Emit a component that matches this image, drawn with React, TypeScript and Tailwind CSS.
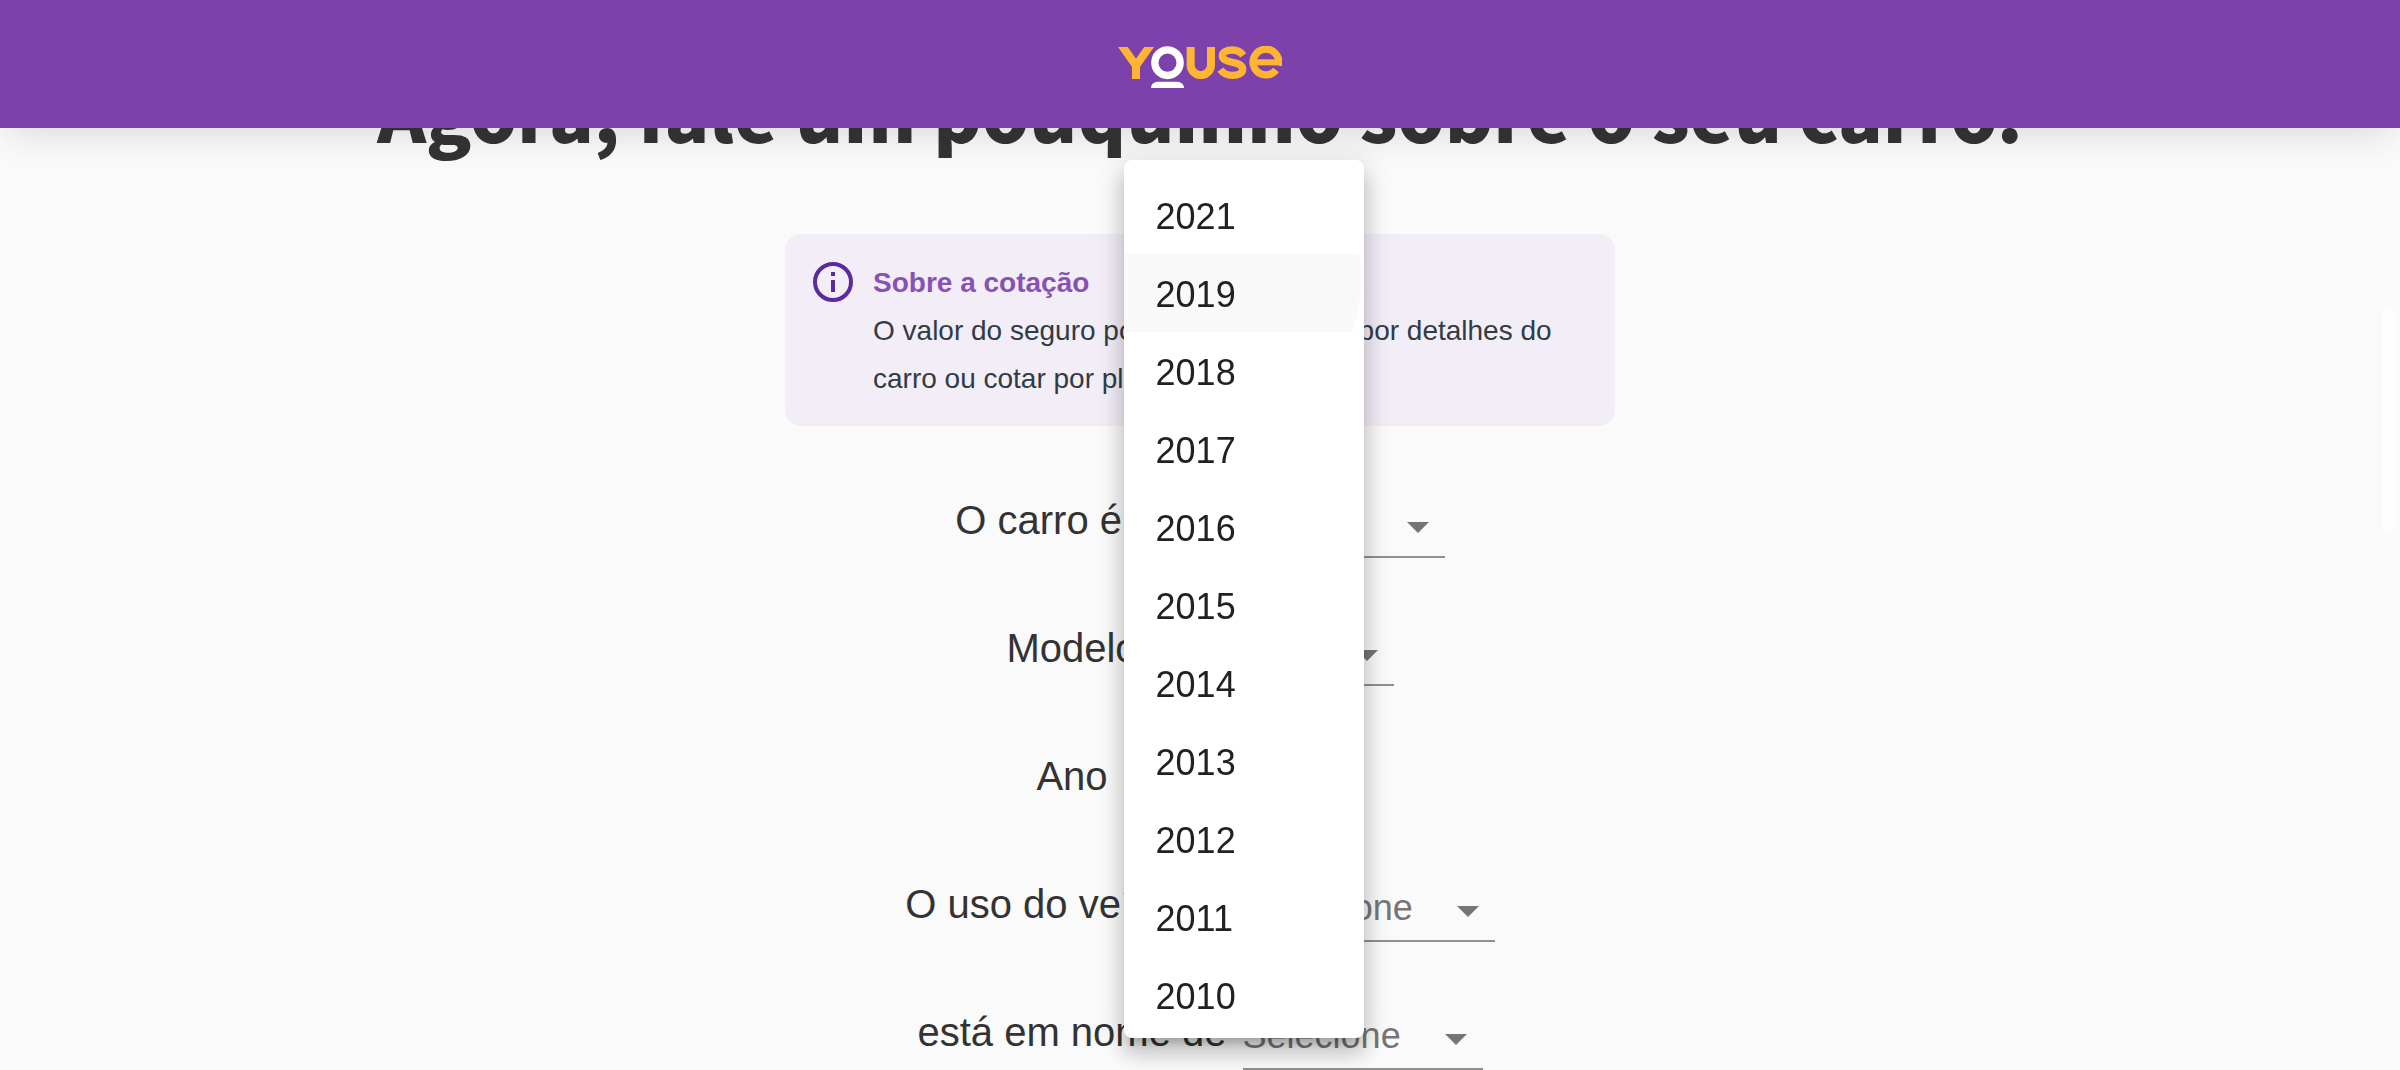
import type { ReactNode } from "react";

const YEARS = [2021, 2019, 2018, 2017, 2016, 2015, 2014, 2013, 2012, 2011, 2010];
const ACTIVE_YEAR = 2019;

function Logo() {
  return (
    <svg
      viewBox="114 78 492 126"
      className="h-[42px] w-[164px]"
      fill="none"
      stroke="#ffb532"
      role="img"
      aria-label="Youse"
    >
      <clipPath id="logo-top">
        <rect x="114" y="81" width="492" height="96" />
      </clipPath>
      <g clipPath="url(#logo-top)" strokeWidth="24">
        <path d="M120 69L168 137L216 69M168 134V178" />
        <path d="M332 80V135a30.500 30.500 0 0 0 61 0V80" />
      </g>
      <ellipse cx="262.500" cy="128" rx="38" ry="38.500" stroke="#fff" strokeWidth="22" />
      <path d="M213 204C213 190 224 185 238 185H287C301 185 312 190 312 204Z" fill="#fff" stroke="none" />
      <path
        d="M490 106C482 95 470 90 457 90C440 90 427 96 427 107C427 120 441 123 458 127C476 130 488 135 488 148C488 160 475 166 457 166C442 166 430 161 421 149"
        strokeWidth="22"
      />
      <path d="M519 127H606" strokeWidth="18" />
      <path d="M595 136A38.500 38.500 0 1 0 588 150" strokeWidth="22" />
    </svg>
  );
}

function InfoIcon() {
  return (
    <svg viewBox="0 0 40 40" className="h-10 w-10 shrink-0" fill="none" aria-hidden="true">
      <circle cx="20" cy="20" r="18" stroke="#5c2aa0" strokeWidth="4" />
      <path d="M18 10h4v4h-4zM18 18h4v12h-4z" fill="#5c2aa0" />
    </svg>
  );
}

function YearMenu() {
  return (
    <ul
      role="listbox"
      aria-label="Ano do carro"
      className="absolute -top-[588px] left-0 z-20 h-[878px] w-full overflow-hidden rounded-lg bg-white pt-4 shadow-[0_10px_10px_-6px_rgba(0,0,0,0.2),0_16px_20px_2px_rgba(0,0,0,0.14),0_6px_28px_4px_rgba(0,0,0,0.12)]"
    >
      {YEARS.map((year) => (
        <li key={year} role="option" aria-selected={year === ACTIVE_YEAR}>
          <button
            type="button"
            className="relative block h-[78px] w-full overflow-hidden px-8 pt-[3px] text-left text-4xl text-[#212121]"
          >
            {year === ACTIVE_YEAR && (
              <span className="absolute -top-[140px] -left-[93px] h-[330px] w-[330px] rounded-full bg-[#f9f9f9]" />
            )}
            <span className="relative">{year}</span>
          </button>
        </li>
      ))}
    </ul>
  );
}

type FieldProps = { id: string; label: string; value: string; children?: ReactNode };

function Field({ id, label, value, children }: FieldProps) {
  return (
    <div className="flex items-start justify-center gap-4">
      <label htmlFor={id} className="text-[40px] leading-[64px]">
        {label}
      </label>
      <div className="relative mt-1 grid w-60">
        <select
          id={id}
          defaultValue={value}
          className="col-start-1 row-start-1 h-[66px] w-full appearance-none border-b-2 border-[#8f8f8f] bg-transparent text-4xl text-[#757575] outline-none"
        >
          <option>{value}</option>
        </select>
        <svg
          viewBox="0 0 22 11"
          className="pointer-events-none col-start-1 row-start-1 mt-[5px] mr-4 h-[11px] w-[22px] self-center justify-self-end"
          aria-hidden="true"
        >
          <path d="M0 0H22L11 11Z" fill="#757575" />
        </svg>
        {children}
      </div>
    </div>
  );
}

export default function App() {
  return (
    <div className="min-h-screen overflow-hidden bg-[#fafafa] font-['Liberation_Sans',Arial,sans-serif] text-[#333]">
      <header className="fixed inset-x-0 top-0 z-10 flex h-32 items-center justify-center bg-[#7d41ab] pt-1.5 shadow-[0_12px_36px_-8px_rgba(20,30,28,0.16)]">
        <Logo />
      </header>

      <main className="flex flex-col items-center pt-[66px]">
        <h1 className="text-center font-['Noto_Sans_CJK_JP',sans-serif] text-[74px] leading-[90px] font-black">
          Agora, fale um pouquinho sobre o seu carro.
        </h1>

        <section className="mt-[78px] flex w-full max-w-[830px] gap-5 rounded-2xl bg-[#f3edf8] px-7 pt-[25px] pb-[23px]">
          <div className="pt-[3px]">
            <InfoIcon />
          </div>
          <div className="text-[28px] leading-[48px] text-[#2f3c44]">
            <h2 className="font-bold text-[#8752b6]">Sobre a cotação</h2>
            <p>O valor do seguro pode variar se cotar por detalhes do carro ou cotar por placa.</p>
          </div>
        </section>

        <form className="mt-[62px] flex w-full flex-col gap-[58px]">
          <Field id="condition" label="O carro é um" value="Usado" />
          <Field id="model" label="Modelo" value="Onix" />
          <Field id="year" label="Ano" value="2019">
            <YearMenu />
          </Field>
          <Field id="usage" label="O uso do veículo é" value="Selecione" />
          <Field id="owner" label="está em nome de" value="Selecione" />
        </form>
      </main>

      <div className="fixed top-[308px] right-1 z-10 h-56 w-3.5 rounded-full bg-[#fdfdfd]" />
    </div>
  );
}
